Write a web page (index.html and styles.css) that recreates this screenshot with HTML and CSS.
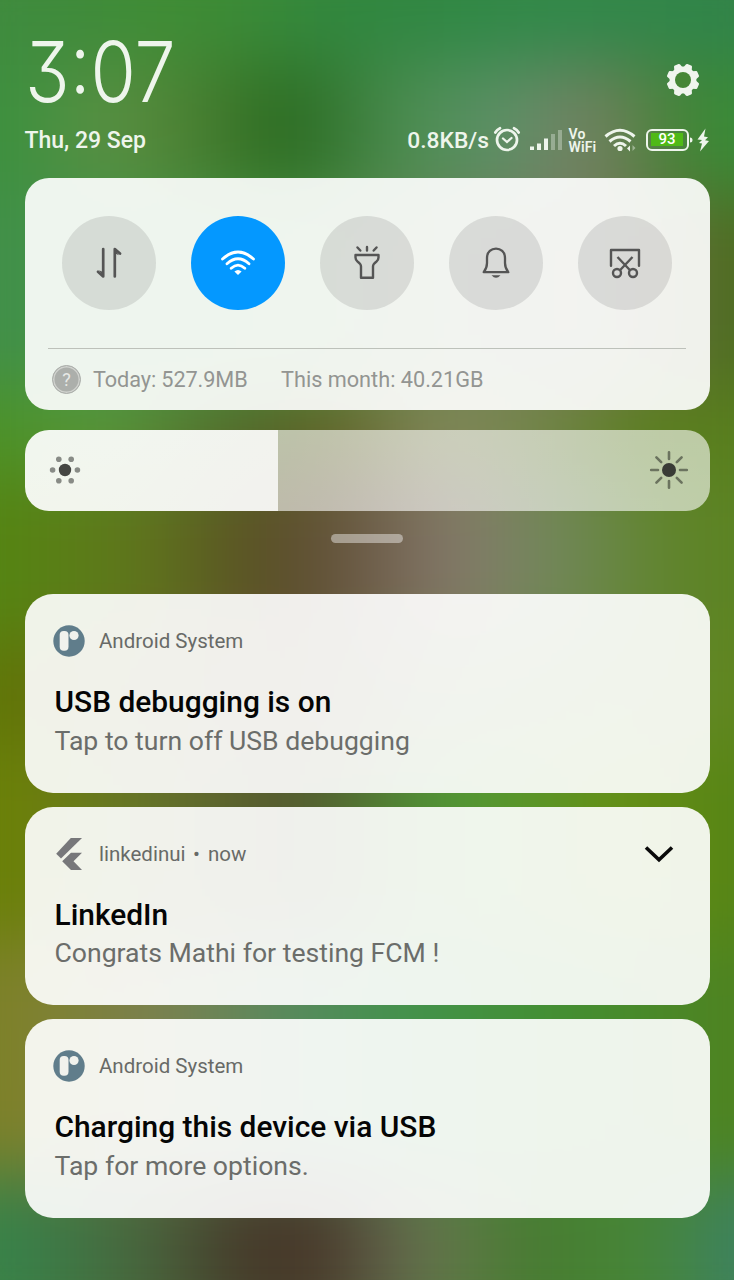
FILE: index.html
```html
<!DOCTYPE html>
<html lang="en">
<head>
<meta charset="utf-8">
<title>Notification shade</title>
<link rel="stylesheet" href="styles.css">
</head>
<body>
<div class="backdrop"><div class="wallpaper"><i class="b1"></i><i class="b2"></i><i class="b3"></i><i class="b4"></i><i class="b5"></i><i class="b6"></i><i class="b7"></i><i class="b8"></i><i class="b9"></i></div></div>
<main class="shade">
  <header class="top">
    <div class="clock-row">
      <div class="clock">3:07</div>
      <svg class="gear" width="34" height="34" viewBox="-17 -17 34 34"><g fill="#f0f5ee"><path id="t" d="M-4.400-12L-3.300-15.500Q-3-16.400-2-16.400H2Q3-16.400 3.300-15.500L4.400-12V12L3.300 15.500Q3 16.400 2 16.400H-2Q-3 16.400-3.300 15.500L-4.400 12Z" transform="rotate(22.500)"/><use href="#t" transform="rotate(45)"/><use href="#t" transform="rotate(90)"/><use href="#t" transform="rotate(135)"/><circle r="13.400"/></g><circle r="8" fill="#468636"/></svg>
    </div>
    <div class="status-row">
      <div class="date">Thu, 29 Sep</div>
      <div class="status">
        <span class="speed">0.8KB/s</span>
        <svg class="alarm" width="28" height="28" viewBox="0 0 28 28" fill="none" stroke="#eef5ec" stroke-width="2.700" stroke-linecap="round"><circle cx="14" cy="15" r="10"/><path d="M10 13.500l4 3.500 4.500-4" stroke-width="2.300"/><path d="M2.300 7.500Q4 4.500 7 3.200M25.700 7.500Q24 4.500 21 3.200"/></svg>
        <svg class="signal" width="32" height="22" viewBox="0 0 32 22" fill="#eef5ec"><rect y="17.500" width="4" height="3.500"/><rect x="7" y="14.500" width="4" height="6.500"/><rect x="14" y="9.500" width="4" height="11.500"/><g opacity=".35"><rect x="21" y="5" width="4" height="16"/><rect x="28" y="1" width="4" height="20"/></g></svg>
        <span class="vowifi"><b>Vo</b><b>WiFi</b></span>
        <svg class="wifi-s" width="32" height="24" viewBox="0 0 32 24" fill="none" stroke="#eef5ec" stroke-width="3"><path d="M1.500 8.500Q16-4 30.500 8.500M5.500 13.500Q16 4.500 26.500 13.500M10 18Q16 12.500 22 18"/><circle cx="16" cy="20.500" r="2.600" fill="#eef5ec" stroke="none"/><path d="M26 17.500v6l-3-3z" fill="#eef5ec" stroke="none"/><path d="M28.500 23v-6l3 3z" fill="#eef5ec" stroke="none" opacity=".45"/></svg>
        <span class="battery"><span class="level">93</span></span>
        <svg class="bolt" width="20" height="24" viewBox="0 0 20 24" fill="#eef5ec"><path d="M0 9.500q2.500 0 2.500 2.500T0 14.500zM15.500 .5L7.500 11.500l4.500 .5-3 3 3 .5L10 23.500 19 13l-4-.8 3-3-4-.7z"/></svg>
      </div>
    </div>
  </header>

  <section class="card quick">
    <div class="toggles">
      <div class="toggle"><svg width="40" height="40" viewBox="-20 -20 40 40" fill="none" stroke="#555" stroke-width="2.700" stroke-linecap="round" stroke-linejoin="round"><path d="M-5.800-14V13.400L-11 8.800M5.800 13.400V-14L11-9.400"/><path d="M-10 7.200l4 1.800v4zM10-7.800l-4-1.800v-4z" fill="#555" stroke="none"/></svg></div>
      <div class="toggle on"><svg width="40" height="40" viewBox="-20 -20 40 40" fill="none" stroke="#fff" stroke-width="2.800" stroke-linecap="round"><path d="M-15.500-4Q0-18 15.500-4M-11 .800Q0-9.200 11 .800M-6.800 5.300Q0-1 6.800 5.300"/><path d="M-3.600 8.600Q0 5.300 3.600 8.600L0 12z" fill="#fff" stroke="none"/></svg></div>
      <div class="toggle"><svg width="40" height="40" viewBox="-20 -20 40 40" fill="none" stroke="#555" stroke-width="2.400" stroke-linejoin="round" stroke-linecap="round"><path d="M-11.500-8H11.500V-5.500Q11.500-3 9.500-1.500Q6 1 6 3.500V14.700H-6V3.500Q-6 1-9.500-1.500Q-11.500-3-11.500-5.500ZM0-16v3.500M-9.500-15.500l2.800 3M9.500-15.500l-2.800 3"/></svg></div>
      <div class="toggle"><svg width="40" height="40" viewBox="-20 -20 40 40" fill="none" stroke="#555" stroke-width="2.300" stroke-linejoin="round"><path d="M-9-5C-9-17.500 9-17.500 9-5V0Q9 5 12.300 9.200H-12.300Q-9 5-9 0Z"/><path d="M-4.500 12.300H4.500Q0 17.300-4.500 12.300z" fill="#555" stroke="none"/></svg></div>
      <div class="toggle"><svg width="40" height="40" viewBox="-20 -20 40 40" fill="none" stroke="#555" stroke-width="2.400" stroke-linejoin="round"><path d="M-14 2.700V-13H14V2.700" stroke-linecap="round"/><path d="M-7.500-6L4.800 7M7.500-6L-4.800 7"/><circle cx="-8" cy="10" r="4"/><circle cx="8" cy="10" r="4"/></svg></div>
    </div>
    <div class="usage"><span class="help">?</span><span class="today">Today: 527.9MB</span><span class="month">This month: 40.21GB</span></div>
  </section>

  <section class="slider">
    <svg width="32" height="32" viewBox="-16 -16 32 32" fill="#888b86"><circle r="6.200" fill="#454643"/><circle cx="-12.400" r="2.800"/><circle cx="12.400" r="2.800"/><circle cx="-6.200" cy="-10.700" r="2.800"/><circle cx="6.200" cy="-10.700" r="2.800"/><circle cx="-6.200" cy="10.700" r="2.800"/><circle cx="6.200" cy="10.700" r="2.800"/></svg>
    <svg width="40" height="40" viewBox="-20 -20 40 40" stroke="#6b735f" stroke-width="2.600" stroke-linecap="round"><circle r="7" fill="#393b36" stroke="none"/><path d="M-17.800 0h6.800M17.800 0h-6.800M0-17.800v6.800M0 17.800v-6.800M-12.600-12.600l4.800 4.800M12.600 12.600l-4.800-4.800M12.600-12.600l-4.800 4.800M-12.600 12.600l4.800-4.800"/></svg>
  </section>
  <div class="handle"></div>

  <section class="list">
    <article class="card note">
      <div class="note-head"><svg class="app" width="32" height="32" viewBox="0 0 32 32"><circle cx="16" cy="16" r="15.700" fill="#607d8b"/><rect x="6.700" y="6" width="8.800" height="19.800" rx="4" fill="#f1f2ed"/><circle cx="21" cy="10.500" r="4.600" fill="#f1f2ed"/></svg><span>Android System</span></div>
      <h2>USB debugging is on</h2>
      <p>Tap to turn off USB debugging</p>
    </article>
    <article class="card note">
      <div class="note-head"><svg class="app" width="32" height="32" viewBox="0 0 32 32" fill="#77777a"><path d="M17.800 0H29L8 20.500l-4.800-4.800z"/><path d="M18 14.800h11l-8.500 8.400L29 32H18L9.200 23.200z"/></svg><span>linkedinui</span><span class="sep">•</span><span class="when">now</span><svg class="chevron" width="30" height="18" viewBox="0 0 30 18" fill="none" stroke="#0a0a0a" stroke-width="3.600"><path d="M2 2.500l13 12.300L28 2.500"/></svg></div>
      <h2>LinkedIn</h2>
      <p>Congrats Mathi for testing FCM !</p>
    </article>
    <article class="card note">
      <div class="note-head"><svg class="app" width="32" height="32" viewBox="0 0 32 32"><circle cx="16" cy="16" r="15.700" fill="#607d8b"/><rect x="6.700" y="6" width="8.800" height="19.800" rx="4" fill="#f1f2ed"/><circle cx="21" cy="10.500" r="4.600" fill="#f1f2ed"/></svg><span>Android System</span></div>
      <h2>Charging this device via USB</h2>
      <p>Tap for more options.</p>
    </article>
  </section>
</main>
</body>
</html>
```
FILE: styles.css
```css
* { box-sizing: border-box; }
html { overflow: hidden; }
body { margin: 0; width: 734px; height: 1280px; position: relative; overflow: hidden; font-family: Roboto, sans-serif; background: #4f852c; }
svg { display: block; flex: none; }

/* blurred wallpaper, built from soft horizontal bands */
.backdrop { position: absolute; inset: 0; overflow: hidden; }
.wallpaper { width: 854px; height: 1400px; margin: -60px; display: grid; grid-template-rows: 125px 130px 190px 90px 165px 105px 195px 235px 1fr; filter: blur(34px); }
.b1 { background: linear-gradient(90deg, #3f8b3f 8%, #3f8c34 30%, #30863f 48%, #32894a 70%, #31824a); }
.b2 { background: linear-gradient(90deg, #3c903f 8%, #5b9043 20%, #497f31 30%, #296a20 41%, #4b8d50 54%, #5d9068 66%, #757f62 76%, #438434 87%, #378c3a 95%); }
.b3 { background: linear-gradient(90deg, #41904a 8%, #4b9444 40%, #6c8058 60%, #7a7860 76%, #4d6b1e 93%); }
.b4 { background: linear-gradient(90deg, #4b9228 7%, #58983c 19%, #52692a 36%, #606424 45%, #838a5a 59%, #708445 71%, #5a7e1c 83%, #587e1f); }
.b5 { background: linear-gradient(90deg, #558512 7%, #5f761c 23%, #5a4f26 38%, #64533c 46%, #85796b 60%, #708859 72%, #5f842a 86%, #5a821d); }
.b6 { background: linear-gradient(90deg, #617606 8%, #6d6528 26%, #665234 41%, #6c8248 60%, #658b32 78%, #5f8318); }
.b7 { background: linear-gradient(90deg, #6c8106 8%, #66752a 24%, #535730 41%, #4f9a36 60%, #668f14 80%, #558316 95%); }
.b8 { background: linear-gradient(90deg, #7f8128 8%, #7b8050 26%, #578a5f 41%, #42924b 55%, #438f32 72%, #4f8220 94%); }
.b9 { background: linear-gradient(90deg, #38834a 8%, #49653d 24%, #46392a 36%, #48392a 45%, #60604a 52%, #64774c 58%, #477b31 69%, #478636 82%, #3c8165 95%); }

.shade { position: relative; padding: 0 24.500px; }
.top { height: 178px; color: #eef5ec; }
.clock-row { display: flex; justify-content: space-between; align-items: flex-start; height: 124px; padding-right: 9.500px; }
.clock { width: 150px; font: 260 84px/84px Inter, sans-serif; font-feature-settings: "cv09" 1; margin-top: 30px; transform-origin: 0 0; transform: scaleX(.875); white-space: nowrap; }
.gear { margin-top: 63px; }
.status-row { display: flex; justify-content: space-between; height: 32px; align-items: center; }
.date { font-size: 23px; font-weight: 500; white-space: nowrap; }
.status { display: flex; align-items: center; }
.speed { font-size: 22.800px; font-weight: 500; white-space: nowrap; }
.alarm { margin-left: 4px; margin-top: -2px; }
.signal { margin-left: 8.500px; }
.vowifi { width: 29px; margin-left: 7px; display: flex; flex-direction: column; font: 600 14px/14px Roboto, sans-serif; letter-spacing: .1px; }
.vowifi b { height: 13.500px; font-weight: 600; }
.wifi-s { margin-left: 6px; }
.battery { width: 43px; height: 22px; border: 2.500px solid #eef5ec; border-radius: 6px; margin-left: 10px; padding: 2px 3.500px; }
.level { display: block; height: 13px; background: #4fb916; color: #fff; font: 500 15px/13px Roboto, sans-serif; text-align: center; }
.bolt { margin-left: 1px; }

.card { background: rgba(255,255,255,.91); }
.quick { height: 232px; border-radius: 24px; padding: 38px 23.500px 0; }
.toggles { display: flex; justify-content: space-between; padding: 0 14px; height: 132px; }
.toggle { width: 94px; height: 94px; border-radius: 50%; display: grid; place-items: center; background: rgba(70,70,70,.14); }
.toggle.on { background: #0498ff; }
.usage { border-top: 1px solid #bdc1ba; height: 62px; display: flex; align-items: center; color: #939592; font-size: 21.700px; padding-left: 4px; white-space: nowrap; }
.help { width: 29px; height: 29px; border-radius: 50%; background: #acafab; border: 1px solid #acafab; box-shadow: inset 0 0 0 1.500px #d0d2ce; color: #e7e9e6; font-size: 18px; line-height: 28px; text-align: center; }
.today { width: 155px; margin-left: 12px; letter-spacing: -.1px; }
.month { margin-left: 33px; }
.slider { height: 81px; margin-top: 20px; border-radius: 24px; display: flex; align-items: center; justify-content: space-between; padding: 0 21px 1px 24.500px; background: linear-gradient(90deg, rgba(255,255,255,.92) 253px, rgba(255,255,255,.6) 253px); }
.handle { width: 72px; height: 9px; border-radius: 5px; background: rgba(255,255,255,.42); margin: 23px auto 0; }

.list { display: grid; gap: 14px; margin-top: 51.400px; }
.note { height: 198.400px; border-radius: 28px; padding: 31px 30px 0; white-space: nowrap; }
.note-head { display: flex; align-items: center; height: 32px; margin-left: -2px; color: #686a67; font-size: 20.500px; }
.note-head span { margin-left: 14.500px; }
.note-head .sep { margin-left: 7.500px; }
.note-head .when { margin-left: 8px; }
.chevron { margin-left: auto; margin-right: 6px; }
h2 { margin: 26px 0 0; font-size: 29.900px; line-height: 38px; font-weight: 500; color: #050505; }
p { margin: 2.500px 0 0; font-size: 26.600px; line-height: 34px; color: #6b6d6a; }
```
